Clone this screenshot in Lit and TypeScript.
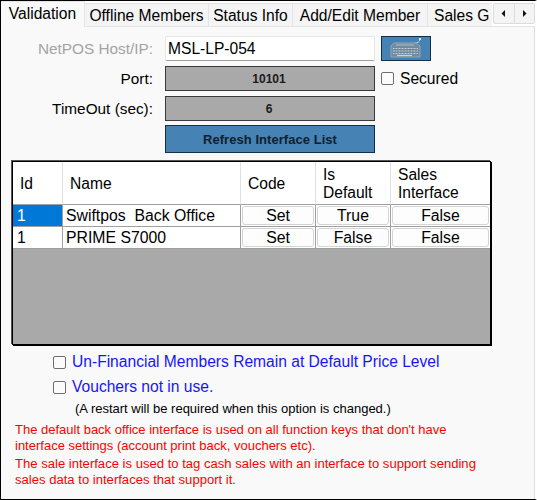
import { LitElement, html, css } from "lit";
import { customElement } from "lit/decorators.js";

const rows = [
  { id: "1", name: "Swiftpos  Back Office", def: "True", sales: "False", selected: true },
  { id: "1", name: "PRIME S7000", def: "False", sales: "False", selected: false },
];

@customElement("app-root")
export class AppRoot extends LitElement {
  static styles = css`
    :host { display: block; width: 537px; height: 500px; font-family: "Liberation Sans", Arial, sans-serif; font-size: 15.6px; color: #000; overflow: hidden; }
    .frame { box-sizing: border-box; width: 537px; height: 500px; border: 1px solid #000; border-right: 2px solid #fff; background: #f9f9f9; display: flex; flex-direction: column; }
    .tabs { height: 26px; display: flex; align-items: flex-end; background: #fff; border-bottom: 1px solid #e4e4e4; flex: none; position: relative; box-sizing: border-box; }
    .tab { height: 23px; box-sizing: border-box; background: #f4f4f4; border: 1px solid #e4e4e4; border-bottom: none; border-left: none; display: flex; align-items: center; justify-content: center; flex: none; white-space: nowrap; padding-top: 1px; }
    .tab.sel { position: relative; z-index: 1; align-self: flex-start; width: 84px; height: 26px; background: #f9f9f9; padding: 0 0 2px; }
    .tab.last { justify-content: flex-start; padding-left: 6px; width: 64px; border-right: none; }
    .scroll { position: absolute; right: 0; top: 2px; display: flex; background: #f4f4f4; border: 1px solid #dcdcdc; height: 21px; width: 42px; box-sizing: border-box; border-radius: 2px; }
    .scroll span { flex: 1; display: flex; align-items: center; justify-content: center; }
    .scroll span + span { border-left: 1px solid #dcdcdc; }
    .body { flex: 1; display: flex; flex-direction: column; padding: 9px 0 0 10px; min-height: 0; border-right: 1px solid #ddd; }
    .form { display: grid; grid-template-columns: 142px 210px 50px; column-gap: 12px; row-gap: 5px; grid-template-rows: 25px 25px 25px 28px; }
    .lbl { text-align: right; line-height: 25px; white-space: nowrap; font-size: 15.35px; }
    .lbl.off { color: #a3a3a3; }
    .input { background: #fff; border: 1px solid #e6e6e6; border-bottom: 1px solid #a0a0a0; border-radius: 2px; box-sizing: border-box; padding-left: 2px; line-height: 23px; }
    .num { background: #a9a9a9; border: 1px solid #3a3a3a; box-sizing: border-box; display: flex; align-items: center; justify-content: center; font-size: 12px; font-weight: bold; color: #1a1a1a; padding-right: 2px; }
    .blue { background: #4682b4; border: 1px solid #12304a; box-sizing: border-box; display: flex; align-items: center; justify-content: center; }
    .kbd { margin-left: -6px; width: 50px; }
    .refresh { font-size: 13px; font-weight: bold; color: #10202c; margin-top: -1px; height: 28px; letter-spacing: 0.05px; }
    .sec { display: flex; align-items: center; gap: 6px; margin-left: -6px; white-space: nowrap; }
    .cb { width: 13px; height: 13px; box-sizing: border-box; border: 1px solid #6e6e6e; border-radius: 2px; background: #fbfbfb; flex: none; }
    .grid { box-sizing: border-box; width: 479px; height: 184px; margin: 7px 0 0 1px; border: 1px solid #000; box-shadow: -1px -1px 0 #555, 1px 1px 0 #000; background: #a9a9a9; display: grid; grid-template-columns: 50px 178px 75px 75px 99px; grid-template-rows: 43px 22px 22px; align-content: start; }
    .h { background: #fff; border-right: 1px solid #e0e0e0; border-bottom: 1px solid #a0a0a0; display: flex; align-items: center; padding: 1px 0 0 7px; line-height: 18px; box-sizing: border-box; }
    .c { background: #fff; border-right: 1px solid #a0a0a0; border-bottom: 1px solid #a0a0a0; box-sizing: border-box; display: flex; align-items: center; padding: 1px 0 0 3px; white-space: pre; font-size: 15.8px; }
    .c.first { padding-left: 4px; }
    .c.sel { background: #0078d7; color: #fff; }
    .c.btn { padding: 1px; align-items: stretch; }
    .bt { flex: 1; background: #fdfdfd; border: 1px solid #d4d4d4; border-radius: 3px; display: flex; align-items: center; justify-content: center; padding-top: 1px; }
    .c.end, .h.end { border-right: none; }
    .opts { display: flex; flex-direction: column; gap: 5px; margin-top: 7px; }
    .opt { display: flex; align-items: center; gap: 6px; color: #1515ff; margin-left: 42px; height: 20px; white-space: nowrap; }
    .note { font-size: 13px; margin: 4px 0 0 64px; line-height: 16px; white-space: nowrap; }
    .red { color: #ff0000; font-size: 13px; line-height: 16px; margin: 5px 0 0 4px; white-space: nowrap; }
    .red p { margin: 0; }
    .red p + p { margin-top: 2px; font-size: 13.08px; }
  `;

  render() {
    return html`
      <div class="frame">
        <div class="tabs">
          <div class="tab sel">Validation</div>
          <div class="tab" style="width:124px">Offline Members</div>
          <div class="tab" style="width:84px">Status Info</div>
          <div class="tab" style="width:135px">Add/Edit Member</div>
          <div class="tab last">Sales G</div>
          <div class="scroll">
            <span><svg width="5" height="7" viewBox="0 0 5 7"><path d="M4 0 L0.5 3.5 L4 7 Z" fill="#111"/></svg></span>
            <span><svg width="5" height="7" viewBox="0 0 5 7"><path d="M1 0 L4.5 3.5 L1 7 Z" fill="#111"/></svg></span>
          </div>
        </div>
        <div class="body">
          <div class="form">
            <div class="lbl off">NetPOS Host/IP:</div>
            <div class="input">MSL-LP-054</div>
            <div class="blue kbd">
              <svg width="34" height="22" viewBox="0 0 34 22" fill="none">
                <path d="M26 5 C28 5 31 4 31 1" stroke="#c8d2da" stroke-width="1"/>
                <rect x="30" y="0" width="2" height="2" fill="#e6e6e6"/>
                <path d="M5 5 H27 L31 8 V19 H2 V8 Z" fill="#6f8ca5" stroke="#98a5b0"/>
                <path d="M7 7 H25" stroke="#b4bcc2"/>
                <path d="M4 10.5 H29 M4 13 H29 M4 15.5 H29" stroke="#c5ced5"/>
                <path d="M6 9 V16 M9 9 V16 M12 9 V16 M15 9 V16 M18 9 V16 M21 9 V16 M24 9 V16 M27 9 V16" stroke="#6a86a0"/>
                <path d="M8 17.5 H23" stroke="#ccd3d9" stroke-width="1.2"/>
              </svg>
            </div>
            <div class="lbl">Port:</div>
            <div class="num">10101</div>
            <div class="sec"><span class="cb"></span>Secured</div>
            <div class="lbl">TimeOut (sec):</div>
            <div class="num">6</div>
            <div></div>
            <div></div>
            <div class="blue refresh">Refresh Interface List</div>
            <div></div>
          </div>
          <div class="grid">
            <div class="h">Id</div>
            <div class="h">Name</div>
            <div class="h">Code</div>
            <div class="h">Is<br />Default</div>
            <div class="h end">Sales<br />Interface</div>
            ${rows.map(
              (r) => html`
                <div class="c first ${r.selected ? "sel" : ""}">${r.id}</div>
                <div class="c">${r.name}</div>
                <div class="c btn"><div class="bt">Set</div></div>
                <div class="c btn"><div class="bt">${r.def}</div></div>
                <div class="c btn end"><div class="bt">${r.sales}</div></div>
              `
            )}
          </div>
          <div class="opts">
            <div class="opt"><span class="cb"></span>Un-Financial Members Remain at Default Price Level</div>
            <div class="opt"><span class="cb"></span>Vouchers not in use.</div>
          </div>
          <div class="note">(A restart will be required when this option is changed.)</div>
          <div class="red">
            <p>The default back office interface is used on all function keys that don't have<br />interface settings (account print back, vouchers etc).</p>
            <p>The sale interface is used to tag cash sales with an interface to support sending<br />sales data to interfaces that support it.</p>
          </div>
        </div>
      </div>
    `;
  }
}
